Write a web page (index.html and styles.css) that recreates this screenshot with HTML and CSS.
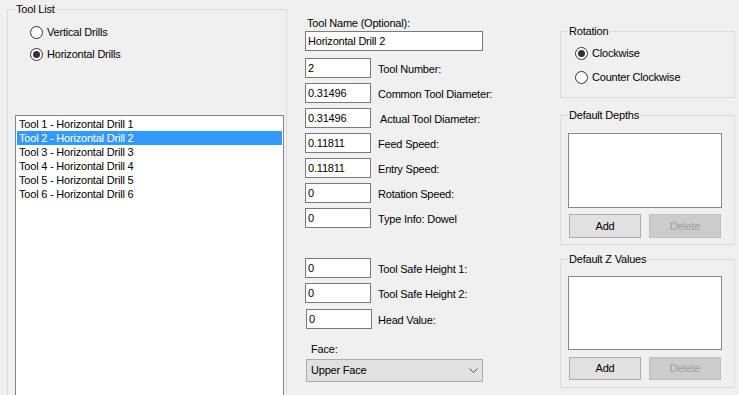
FILE: index.html
```html
<!DOCTYPE html>
<html lang="en">
<head>
  <meta charset="UTF-8" />
  <title>Tool Editor</title>
  <link rel="stylesheet" href="styles.css">
</head>
<body>
  <div class="window">

    <!-- left: tool list -->
    <fieldset class="group tool-list">
      <legend>Tool List</legend>
      <div class="radios">
        <label class="radio"><span class="dot"></span>Vertical Drills</label>
        <label class="radio checked"><span class="dot"></span>Horizontal Drills</label>
      </div>
      <ul class="listbox tools">
        <li>Tool 1 - Horizontal Drill 1</li>
        <li class="selected">Tool 2 - Horizontal Drill 2</li>
        <li>Tool 3 - Horizontal Drill 3</li>
        <li>Tool 4 - Horizontal Drill 4</li>
        <li>Tool 5 - Horizontal Drill 5</li>
        <li>Tool 6 - Horizontal Drill 6</li>
      </ul>
    </fieldset>

    <!-- middle: tool properties -->
    <div class="props">
      <div class="caption">Tool Name (Optional):</div>
      <div class="field wide">Horizontal Drill 2</div>

      <div class="rows">
        <div class="row"><div class="field">2</div><span>Tool Number:</span></div>
        <div class="row"><div class="field">0.31496</div><span>Common Tool Diameter:</span></div>
        <div class="row"><div class="field">0.31496</div><span class="nudge">Actual Tool Diameter:</span></div>
        <div class="row"><div class="field">0.11811</div><span>Feed Speed:</span></div>
        <div class="row"><div class="field">0.11811</div><span>Entry Speed:</span></div>
        <div class="row"><div class="field">0</div><span>Rotation Speed:</span></div>
        <div class="row"><div class="field">0</div><span>Type Info: Dowel</span></div>
      </div>

      <div class="rows second">
        <div class="row"><div class="field">0</div><span>Tool Safe Height 1:</span></div>
        <div class="row"><div class="field">0</div><span>Tool Safe Height 2:</span></div>
        <div class="row head"><div class="field">0</div><span>Head Value:</span></div>
      </div>

      <div class="caption face">Face:</div>
      <div class="combo">
        <span>Upper Face</span>
        <svg width="9" height="5" viewBox="0 0 9 5"><path d="M0.5 0.5 L4.5 4.5 L8.5 0.5" fill="none" stroke="#555" stroke-width="1"/></svg>
      </div>
    </div>

    <!-- right: rotation and defaults -->
    <div class="side">
      <fieldset class="group rotation">
        <legend>Rotation</legend>
        <div class="radios">
          <label class="radio checked"><span class="dot"></span>Clockwise</label>
          <label class="radio"><span class="dot"></span>Counter Clockwise</label>
        </div>
      </fieldset>

      <fieldset class="group depths">
        <legend>Default Depths</legend>
        <ul class="listbox small"></ul>
        <div class="buttons">
          <button>Add</button>
          <button disabled>Delete</button>
        </div>
      </fieldset>

      <fieldset class="group zvals">
        <legend>Default Z Values</legend>
        <ul class="listbox small"></ul>
        <div class="buttons">
          <button>Add</button>
          <button disabled>Delete</button>
        </div>
      </fieldset>
    </div>

  </div>
</body>
</html>
```

FILE: styles.css
```css
body {
  margin: 0;
  background: #f0f0f0;
  font-family: "Liberation Sans", Arial, sans-serif;
  font-size: 11px;
  line-height: 13px;
  letter-spacing: -0.2px;
  color: #000;
  overflow: hidden;
}
.window {
  display: flex;
  align-items: flex-start;
  height: 395px;
  overflow: hidden;
}

/* group boxes */
.group {
  margin: 0;
  padding: 0;
  border: 1px solid #dcdcdc;
  box-sizing: border-box;
  min-width: 0;
}
.group legend {
  padding: 0 1px;
  margin-left: 7px;
  line-height: 13px;
}

/* radio buttons */
.radios {
  display: flex;
  flex-direction: column;
}
.radio {
  display: flex;
  align-items: center;
  height: 16px;
  gap: 4px;
}
.dot {
  position: relative;
  width: 13px;
  height: 13px;
  box-sizing: border-box;
  border: 1px solid #333;
  border-radius: 50%;
  background: #fff;
}
.checked .dot::after {
  content: "";
  position: absolute;
  inset: 2px;
  border-radius: 50%;
  background: #333;
}

/* list boxes */
.listbox {
  list-style: none;
  margin: 0;
  padding: 1px;
  background: #fff;
  border: 1px solid #828790;
  box-sizing: border-box;
}
.listbox li {
  height: 14px;
  line-height: 14px;
  padding-left: 2px;
}
.listbox .selected {
  background: #3399ff;
  color: #fff;
}

/* tool list */
.tool-list {
  margin: 3px 0 0 7px;
  width: 280px;
  height: 420px;
}
.tool-list .radios {
  padding: 8px 0 0 22px;
  gap: 6px;
}
.tools {
  margin: 53px 0 0 7px;
  width: 269px;
  height: 320px;
}

/* properties */
.props {
  margin-left: 18px;
  width: 178px;
}
.caption {
  margin: 17px 0 1px 2px;
}
.field {
  height: 20px;
  box-sizing: border-box;
  border: 1px solid #7a7a7a;
  background: #fff;
  padding: 0 2px;
  line-height: 18px;
  white-space: nowrap;
}
.wide {
  width: 178px;
}
.rows {
  margin-top: 7px;
}
.rows.second {
  margin-top: 30px;
}
.row {
  display: flex;
  align-items: center;
  margin-bottom: 5px;
  white-space: nowrap;
}
.row .field {
  width: 66px;
  flex: none;
}
.row span {
  margin-left: 7px;
  padding-top: 2px;
}
.row .nudge {
  margin-left: 9px;
}
.row.head {
  margin-top: 6px;
}
.row.head .field {
  margin-left: 1px;
}
.row.head span {
  margin-left: 6px;
}
.caption.face {
  margin: 14px 0 3px 6px;
}
.combo {
  margin-left: 1px;
  width: 177px;
  height: 23px;
  box-sizing: border-box;
  border: 1px solid #adadad;
  background: #e1e1e1;
  display: flex;
  align-items: center;
  justify-content: space-between;
  padding: 0 4px;
}

/* right column */
.side {
  margin-left: 77px;
  width: 175px;
}
.rotation {
  margin-top: 25px;
  height: 73px;
}
.rotation .radios {
  padding: 7px 0 0 14px;
  gap: 8px;
}
.depths {
  margin-top: 11px;
  height: 136px;
}
.zvals {
  margin-top: 8px;
  height: 135px;
}
.small {
  margin: 11px 0 0 7px;
  width: 154px;
  height: 75px;
}
.zvals .small {
  margin-top: 10px;
  height: 74px;
}
.buttons {
  display: flex;
  gap: 8px;
  margin: 6px 0 0 8px;
}
.zvals .buttons {
  margin-top: 7px;
}
button {
  width: 72px;
  height: 24px;
  padding: 0;
  font: inherit;
  letter-spacing: inherit;
  color: #000;
  background: #e1e1e1;
  border: 1px solid #adadad;
}
.zvals button {
  height: 23px;
}
button:disabled {
  background: #cccccc;
  border-color: #bfbfbf;
  color: #a0a0a0;
}
```
